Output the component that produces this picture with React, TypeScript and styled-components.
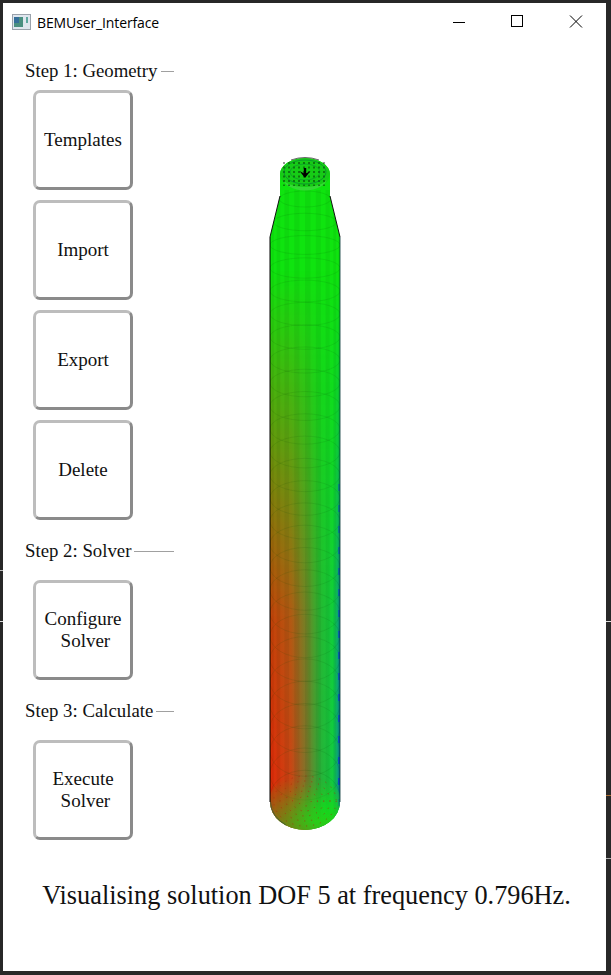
import React from "react";
import styled, { createGlobalStyle } from "styled-components";

const Global = createGlobalStyle`
  html, body { margin: 0; padding: 0; background: #262626; }
  #root { width: 611px; height: 975px; overflow: hidden; }
`;

const Desktop = styled.div`
  position: relative;
  width: 611px;
  height: 975px;
  box-sizing: border-box;
  padding: 3px 5px 4px 3px;
  background: #282828;
`;

const Tick = styled.i<{ $side: "left" | "right"; $y: number; $c: string }>`
  position: absolute;
  top: ${(p) => p.$y}px;
  ${(p) => (p.$side === "left" ? "left: 0;" : "right: 0;")}
  width: ${(p) => (p.$side === "left" ? 3 : 5)}px;
  height: 1px;
  background: ${(p) => p.$c};
`;

const Win = styled.div`
  width: 603px;
  height: 968px;
  background: #fff;
  display: flex;
  flex-direction: column;
`;

const TitleBar = styled.div`
  height: 38px;
  flex: none;
  display: flex;
  align-items: center;
  padding-left: 9px;
  font: 14px "Open Sans", "Noto Sans", sans-serif;
  color: #000;
`;

const AppIcon = styled.svg`
  width: 19px;
  height: 16px;
  margin-right: 6px;
  flex: none;
`;

const Title = styled.span`
  flex: 1;
  letter-spacing: -0.12px;
`;

const Ctl = styled.svg<{ $end?: boolean }>`
  width: 58px;
  height: 38px;
  flex: none;
  margin-right: ${(p) => (p.$end ? 2 : 0)}px;
`;

const Body = styled.div`
  flex: 1;
  display: flex;
  min-height: 0;
`;

const Side = styled.div`
  width: 149px;
  margin-left: 22px;
  flex: none;
  display: flex;
  flex-direction: column;
  font-family: "Liberation Serif", serif;
  color: #111;
`;

const Legend = styled.div<{ $top: number }>`
  display: flex;
  align-items: center;
  height: 20px;
  margin-top: ${(p) => p.$top}px;
  font-size: 18.8px;
  white-space: nowrap;
`;

const Rule = styled.span`
  flex: 1;
  height: 1px;
  background: #a0a0a0;
  margin-left: 3px;
`;

const Stack = styled.div<{ $top: number }>`
  display: flex;
  flex-direction: column;
  gap: 10px;
  margin: ${(p) => p.$top}px 0 0 8px;
`;

const Btn = styled.button`
  width: 100px;
  height: 100px;
  box-sizing: border-box;
  border-style: solid;
  border-width: 3px;
  border-color: #bdbdbd #8a8a8a #8a8a8a #bdbdbd;
  border-radius: 7px;
  background: #fff;
  padding: 0;
  font: 19px/22px "Liberation Serif", serif;
  color: #111;
  white-space: pre;
  text-align: center;
`;

const View = styled.div`
  flex: 1;
  min-width: 0;
  padding-top: 109px;
`;

const Tube = styled.svg`
  display: block;
  width: 432px;
  height: 700px;
`;

const Status = styled.div`
  flex: none;
  height: 93px;
  padding: 2px 0 0 4px;
  box-sizing: border-box;
  text-align: center;
  font: 26.3px/32px "Liberation Serif", serif;
  color: #111;
`;

const bodyPath = "M280 174 L280 196 L270 237 L270 802 A35 28 0 0 0 340 802 L340 237 L330 196 L330 174 A25 16 0 0 0 280 174 Z";

const strips = Array.from({ length: 21 }, (_, i) => 305 + 35 * Math.cos((i * Math.PI) / 20));
const ringYs = Array.from({ length: 27 }, (_, i) => 199 + i * 23);

const TubeDrawing = () => (
  <Tube viewBox="174 150 432 700">
    <defs>
      <clipPath id="shell"><path d={bodyPath} /></clipPath>
      <linearGradient id="lat" gradientUnits="userSpaceOnUse" x1="270" y1="0" x2="340" y2="0">
        <stop offset="0" stopColor="#e02a08" />
        <stop offset="0.3" stopColor="#c84614" />
        <stop offset="0.5" stopColor="#867028" />
        <stop offset="0.72" stopColor="#28b038" />
        <stop offset="0.9" stopColor="#10cc40" />
        <stop offset="0.96" stopColor="#0ca870" />
        <stop offset="1" stopColor="#08709a" />
      </linearGradient>
      <linearGradient id="fade" gradientUnits="userSpaceOnUse" x1="0" y1="270" x2="0" y2="770">
        <stop offset="0" stopColor="#fff" stopOpacity="0" />
        <stop offset="0.35" stopColor="#fff" stopOpacity="0.42" />
        <stop offset="0.7" stopColor="#fff" stopOpacity="0.88" />
        <stop offset="1" stopColor="#fff" stopOpacity="1" />
      </linearGradient>
      <mask id="fadeMask" maskUnits="userSpaceOnUse" x="260" y="150" width="90" height="690">
        <rect x="260" y="150" width="90" height="690" fill="url(#fade)" />
      </mask>
      <radialGradient id="cap" gradientUnits="userSpaceOnUse" cx="326" cy="806" r="58">
        <stop offset="0" stopColor="#10e414" />
        <stop offset="0.35" stopColor="#2cc818" />
        <stop offset="0.72" stopColor="#6c8a14" />
        <stop offset="1" stopColor="#8c6a14" />
      </radialGradient>
      <linearGradient id="capFade" gradientUnits="userSpaceOnUse" x1="0" y1="778" x2="0" y2="822">
        <stop offset="0" stopColor="#fff" stopOpacity="0" />
        <stop offset="1" stopColor="#fff" stopOpacity="1" />
      </linearGradient>
      <mask id="capMask" maskUnits="userSpaceOnUse" x="260" y="760" width="90" height="80">
        <rect x="260" y="760" width="90" height="80" fill="url(#capFade)" />
      </mask>
    </defs>

    <path d={bodyPath} fill="#0fe40f" />
    <g clipPath="url(#shell)">
      <rect x="268" y="250" width="74" height="590" fill="url(#lat)" mask="url(#fadeMask)" />
      {strips.map((x, i) =>
        i < 20 && i % 2 ? (
          <rect key={x} x={Math.min(x, strips[i + 1])} y="190" width={Math.abs(x - strips[i + 1])} height="640"
            fill="#000" opacity="0.05" />
        ) : null
      )}
      {ringYs.map((y, i) => (
        <ellipse key={y} cx="305" cy={y} rx={y < 237 ? 25 + ((y - 196) * 10) / 41 : 35} ry={8 + i * 0.72} fill="none" stroke="#0a4a0a" strokeWidth="0.8" opacity="0.14" />
      ))}
      {Array.from({ length: 16 }, (_, i) => (
        <rect key={i} x="338" y={484 + i * 21} width="2" height="7" fill="#0a3ccc" opacity={0.4 + i * 0.03} />
      ))}
      <ellipse cx="305" cy="802" rx="36" ry="29" fill="url(#cap)" mask="url(#capMask)" />
      {[25, 20, 15, 10, 5].map((r) => (
        <ellipse key={r} cx="305" cy="801" rx={(r * 35) / 28} ry={r} fill="none" stroke="#b02a10" strokeWidth="1" strokeDasharray="1 6" opacity="0.7" />
      ))}
    </g>
    <line x1="270" y1="237" x2="270" y2="802" stroke="#000" strokeWidth="1" />
    <line x1="340" y1="237" x2="340" y2="802" stroke="#033" strokeWidth="0.8" />
    <path d="M280 196 L270 237 M330 196 L340 237" stroke="#111" strokeWidth="1" fill="none" />
    <path d="M270.5 802 A35 28 0 0 0 286 825" stroke="#254" strokeWidth="0.6" fill="none" />

    <ellipse cx="305" cy="174" rx="25" ry="16" fill="#16cc16" />
    <path d="M283 178 A22 12.5 0 0 0 327 178 A22 9 0 0 1 283 178 Z" fill="#35d835" />
    {[289, 294, 299, 304, 309, 314, 319, 324, 284].map((x) => (
      <line key={x} x1={x} y1="162" x2={x} y2="186" stroke="#000" strokeWidth="1" strokeDasharray="2 2.5" opacity="0.8" />
    ))}
    <ellipse cx="305" cy="172" rx="21" ry="12" fill="none" stroke="#064" strokeWidth="0.7" opacity="0.7" />
    <ellipse cx="305" cy="172" rx="15" ry="8" fill="none" stroke="#064" strokeWidth="0.7" opacity="0.5" />
    <path d="M299.5 171 L305 174 L310.5 171 L305 178 Z M303.8 168 H306.2 V174 H303.8 Z" fill="#000" />
    <path d="M291 160 Q305 155 319 160" stroke="#666" strokeWidth="1" fill="none" />
  </Tube>
);

const Icon = () => (
  <AppIcon viewBox="0 0 19 16">
    <rect x="0.5" y="0.5" width="18" height="15" fill="#dfe6ee" stroke="#9aa2ab" />
    <rect x="2" y="3" width="9" height="10" fill="#4a8f80" />
    <rect x="2" y="3" width="5" height="6" fill="#356f9a" />
    <rect x="14" y="3" width="2" height="6" fill="#5fa8a0" />
  </AppIcon>
);

export default function App() {
  return (
    <Desktop>
      <Global />
      <Win>
        <TitleBar>
          <Icon />
          <Title>BEMUser_Interface</Title>
          <Ctl viewBox="0 0 58 38"><path d="M23 19.5 H35" stroke="#000" fill="none" /></Ctl>
          <Ctl viewBox="0 0 58 38"><rect x="23.5" y="12.5" width="11" height="11" stroke="#000" fill="none" /></Ctl>
          <Ctl $end viewBox="0 0 58 38"><path d="M24 12.5 L36 24.5 M36 12.5 L24 24.5" stroke="#000" fill="none" /></Ctl>
        </TitleBar>
        <Body>
          <Side>
            <Legend $top={20}>Step 1: Geometry<Rule /></Legend>
            <Stack $top={9}>
              <Btn>Templates</Btn>
              <Btn>Import</Btn>
              <Btn>Export</Btn>
              <Btn>Delete</Btn>
            </Stack>
            <Legend $top={21}>Step 2: Solver<Rule /></Legend>
            <Stack $top={19}>
              <Btn>{"Configure\n Solver"}</Btn>
            </Stack>
            <Legend $top={21}>Step 3: Calculate<Rule /></Legend>
            <Stack $top={19}>
              <Btn>{"Execute\n Solver"}</Btn>
            </Stack>
          </Side>
          <View><TubeDrawing /></View>
        </Body>
        <Status>Visualising solution DOF 5 at frequency 0.796Hz.</Status>
      </Win>
      <Tick $side="left" $y={570} $c="#bbb" />
      <Tick $side="left" $y={621} $c="#ddd" />
      <Tick $side="right" $y={621} $c="#ddd" />
      <Tick $side="right" $y={795} $c="#a86a30" />
      <Tick $side="right" $y={858} $c="#aaa" />
    </Desktop>
  );
}
